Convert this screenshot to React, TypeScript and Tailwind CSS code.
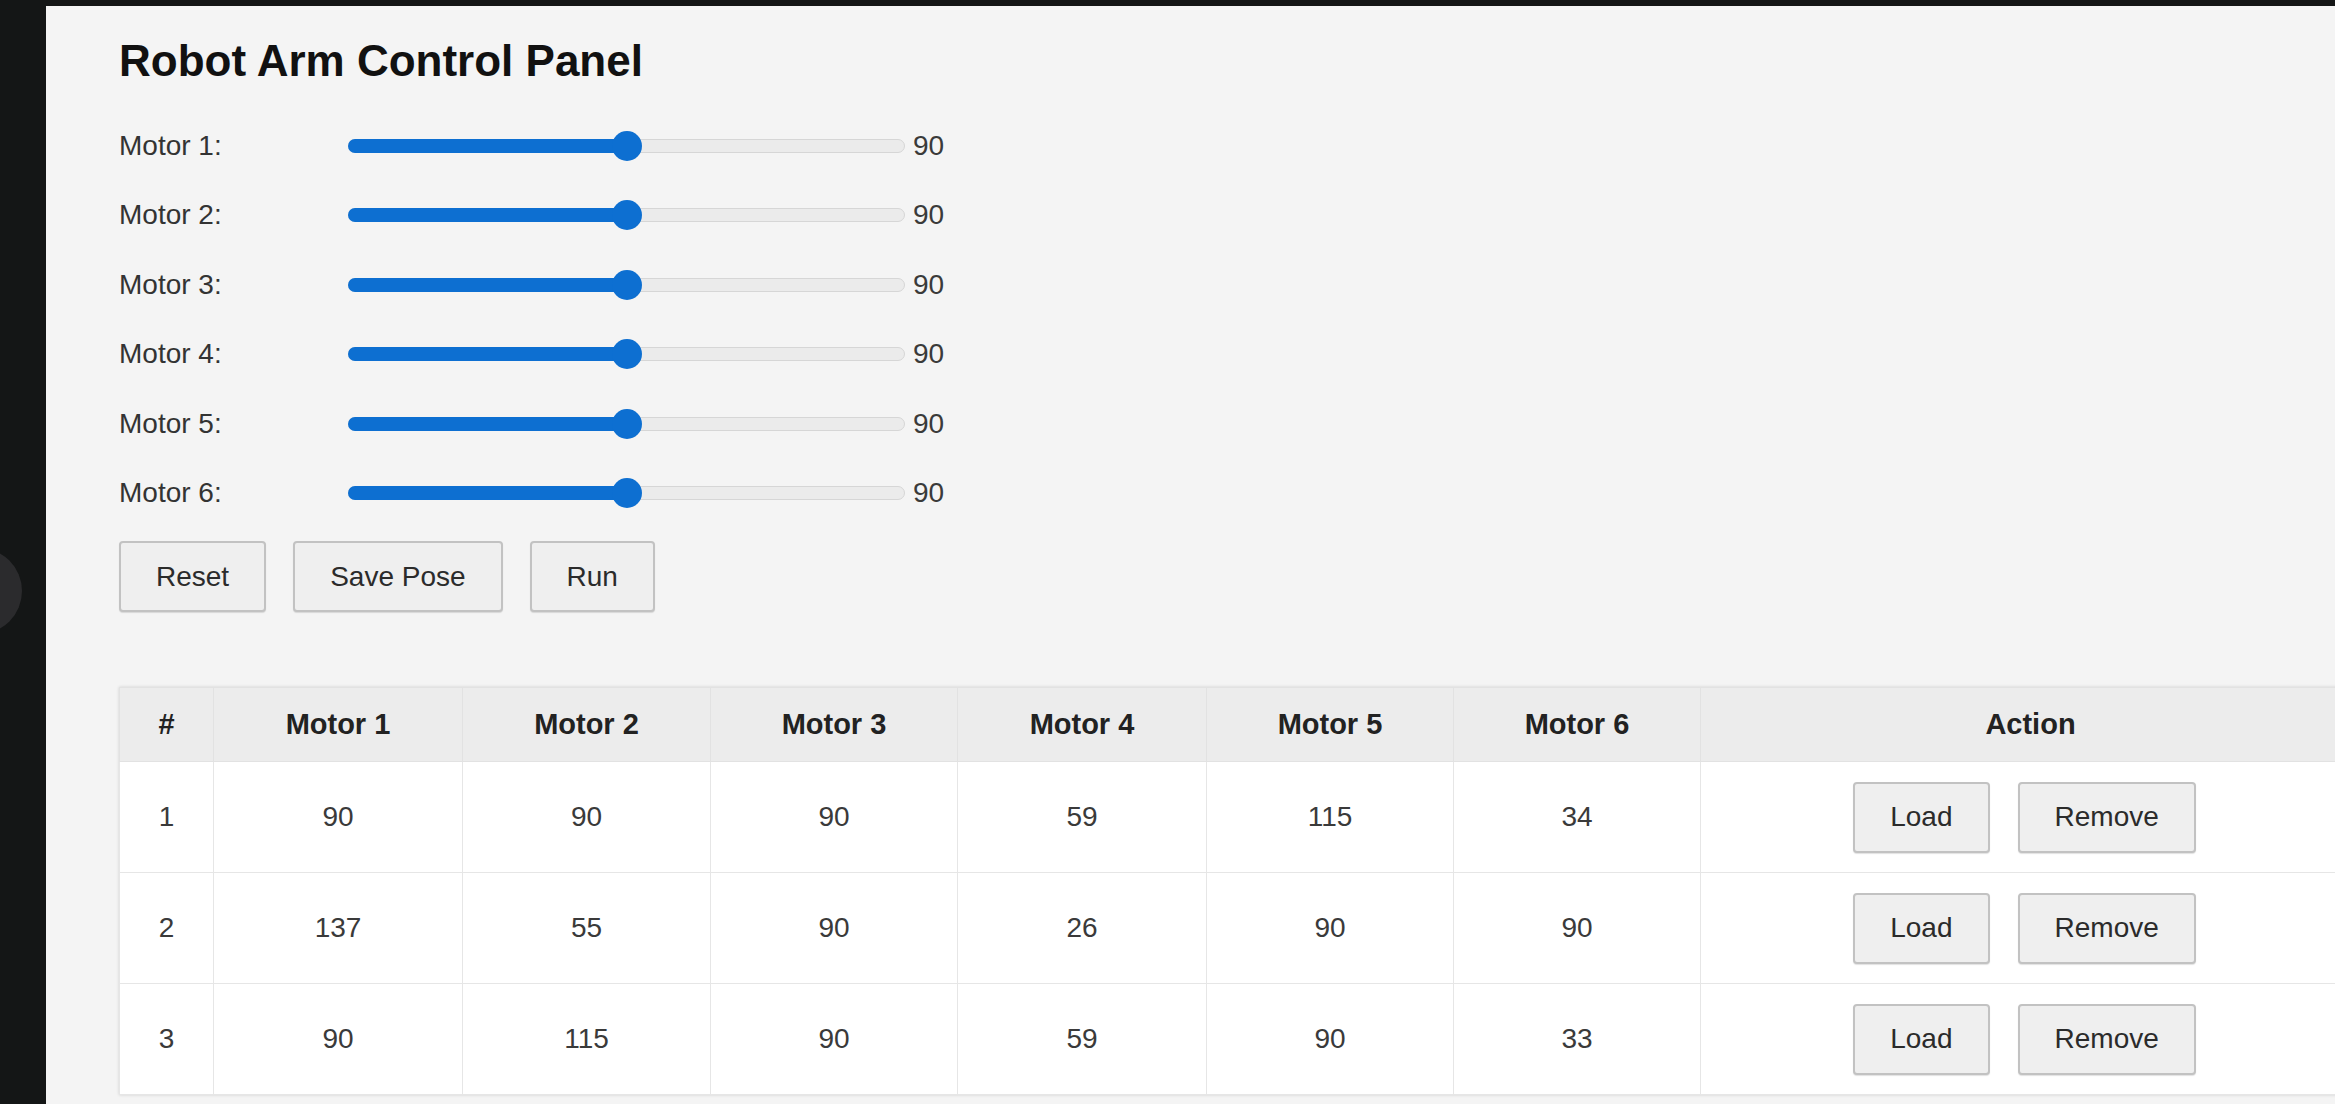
import React from "react";

const font = { fontFamily: '"Liberation Sans", Arial, Helvetica, sans-serif' };

const motors = [1, 2, 3, 4, 5, 6];

const poses = [
  [90, 90, 90, 59, 115, 34],
  [137, 55, 90, 26, 90, 90],
  [90, 115, 90, 59, 90, 33],
];

const colWidths = [94, 249, 248, 247, 249, 247, 247, 660];

const Slider: React.FC<{ value: number; max: number }> = ({ value, max }) => {
  const pct = (value / max) * 100;
  return (
    <div className="relative w-[557px] h-[14px]">
      <div className="absolute inset-0 rounded-full bg-[#ebebeb] border border-[#d6d6d6]" />
      <div
        className="absolute left-0 top-0 h-full rounded-l-full bg-[#0d6fd1]"
        style={{ width: `${pct}%` }}
      />
      <div
        className="absolute top-1/2 -translate-x-1/2 -translate-y-1/2 w-[30px] h-[30px] rounded-full bg-[#0d6fd1]"
        style={{ left: `${pct}%` }}
      />
    </div>
  );
};

const Button: React.FC<{ children: React.ReactNode }> = ({ children }) => (
  <button className="h-[71px] px-[35px] rounded-[4px] border-2 border-[#c2c2c2] bg-[#efefef] text-[28px] text-[#2b2b2b] shadow-[0_1px_1px_rgba(0,0,0,0.12)]">
    {children}
  </button>
);

export default function App() {
  return (
    <div
      style={font}
      className="relative w-full h-screen overflow-hidden bg-[#141616] pt-[6px] pl-[46px]"
    >
      {/* circle at the left edge */}
      <div className="absolute left-[-64px] top-[548px] w-[86px] h-[86px] rounded-full bg-[#2b2b2d]" />

      <div className="h-full bg-[#f4f4f4] pl-[73px] pt-[30px] overflow-hidden">
        <h1 className="text-[44px] leading-[50px] font-bold text-[#111]">
          Robot Arm Control Panel
        </h1>

        <div className="mt-[25px] flex flex-col">
          {motors.map((m) => (
            <div key={m} className="h-[69.5px] flex items-center">
              <span className="w-[229px] text-[28px] text-[#333]">Motor {m}:</span>
              <Slider value={90} max={180} />
              <span className="ml-[8px] text-[28px] text-[#3a3a3a]">90</span>
            </div>
          ))}
        </div>

        <div className="mt-[13px] flex gap-[27px]">
          <Button>Reset</Button>
          <Button>Save Pose</Button>
          <Button>Run</Button>
        </div>

        <table className="mt-[75px] w-[2241px] table-fixed border-collapse bg-white shadow-[0_0_3px_rgba(0,0,0,0.15)]">
          <colgroup>
            {colWidths.map((w, i) => (
              <col key={i} style={{ width: `${w}px` }} />
            ))}
          </colgroup>
          <thead>
            <tr className="h-[74px] bg-[#ececec]">
              <th className="border border-[#e2e2e2] text-[29px] font-bold text-[#222]">#</th>
              {motors.map((m) => (
                <th key={m} className="border border-[#e2e2e2] text-[29px] font-bold text-[#222]">
                  Motor {m}
                </th>
              ))}
              <th className="border border-[#e2e2e2] text-[29px] font-bold text-[#222]">Action</th>
            </tr>
          </thead>
          <tbody>
            {poses.map((p, i) => (
              <tr key={i} className="h-[111px]">
                <td className="border border-[#e6e6e6] text-center text-[28px] text-[#3a3a3a]">{i + 1}</td>
                {p.map((v, j) => (
                  <td key={j} className="border border-[#e6e6e6] text-center text-[28px] text-[#3a3a3a]">
                    {v}
                  </td>
                ))}
                <td className="border border-[#e6e6e6] pr-[12px]">
                  <div className="flex justify-center gap-[28px]">
                    <Button>Load</Button>
                    <Button>Remove</Button>
                  </div>
                </td>
              </tr>
            ))}
          </tbody>
        </table>
      </div>
    </div>
  );
}
